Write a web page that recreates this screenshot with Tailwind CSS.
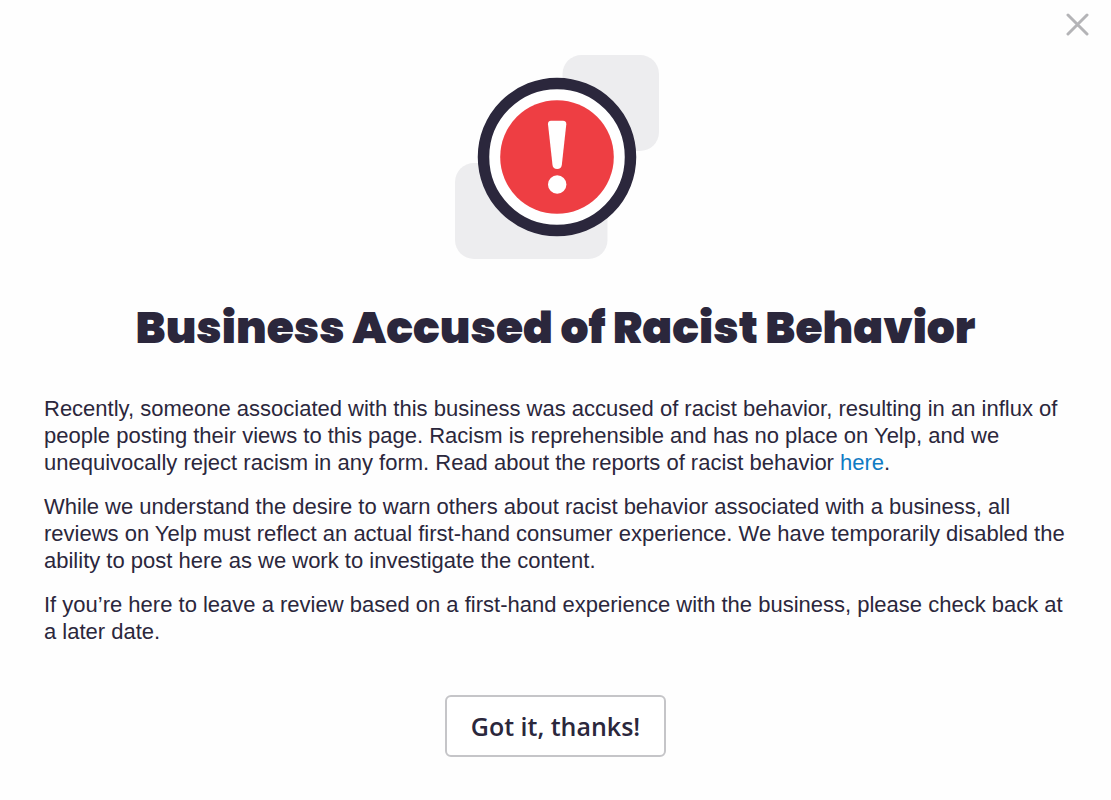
<!DOCTYPE html>
<html lang="en">

<head>
  <meta charset="UTF-8">
  <meta name="viewport" content="width=device-width, initial-scale=1.0">
  <title>Business Accused of Racist Behavior</title>
  <script src="https://cdn.jsdelivr.net/npm/@tailwindcss/browser@4"></script>
</head>

<body class="bg-[#fefefe] text-[#2b273c] font-['Liberation_Sans',Arial,sans-serif]">
  <div role="dialog" aria-labelledby="alertTitle" class="relative min-h-screen flex flex-col items-center px-11 pt-[54px] pb-10">
    <!-- Close button -->
    <button type="button" aria-label="Close" class="absolute top-[11px] right-5 p-0.5 cursor-pointer text-[#b4b4b7]">
      <svg class="w-6 h-6" viewBox="0 0 24 24" fill="none" stroke="currentColor" stroke-width="3" stroke-linecap="round">
        <path d="M3 2L22 21M22 2L3 21" />
      </svg>
    </button>

    <!-- Alert illustration -->
    <svg class="w-[206px] h-[205px]" viewBox="0 0 206 205" aria-hidden="true">
      <rect x="109.500" y="1" width="96.500" height="96" rx="19" fill="#ededef" />
      <rect x="2" y="109" width="152.500" height="96" rx="19" fill="#ededef" />
      <circle cx="104" cy="103" r="73.500" fill="#fff" stroke="#2b273c" stroke-width="11.500" />
      <circle cx="104" cy="103" r="56.800" fill="#ee3e43" />
      <path d="M98 66.700H110Q113.500 66.700 113.300 70.200L108.800 111Q108.300 115 104.200 115Q100 115 99.500 111L95 70.200Q94.800 66.700 98 66.700Z" fill="#fff" />
      <circle cx="104.200" cy="130.500" r="9.200" fill="#fff" />
    </svg>

    <h1 id="alertTitle" class="mt-10 text-center text-[44px] leading-[58px] font-black font-['Poppins','Inter',sans-serif]">Business Accused of Racist Behavior</h1>

    <div class="mt-[38px] w-full flex flex-col gap-[17px] text-[22px] leading-[27px]">
      <p>Recently, someone associated with this business was accused of racist behavior, resulting in an influx of people posting their views to this page. Racism is reprehensible and has no place on Yelp, and we unequivocally reject racism in any form. Read about the reports of racist behavior <a href="#" class="text-[#0f7bc4] hover:underline">here</a>.</p>
      <p>While we understand the desire to warn others about racist behavior associated with a business, all reviews on Yelp must reflect an actual first-hand consumer experience. We have temporarily disabled the ability to post here as we work to investigate the content.</p>
      <p>If you’re here to leave a review based on a first-hand experience with the business, please check back at a later date.</p>
    </div>

    <button type="button" class="mt-[50px] px-6 py-3 border-2 border-[#c5c5c8] rounded-md bg-white cursor-pointer text-[25px] leading-[34px] font-semibold font-['Open_Sans',sans-serif]">Got it, thanks!</button>
  </div>
</body>

</html>
